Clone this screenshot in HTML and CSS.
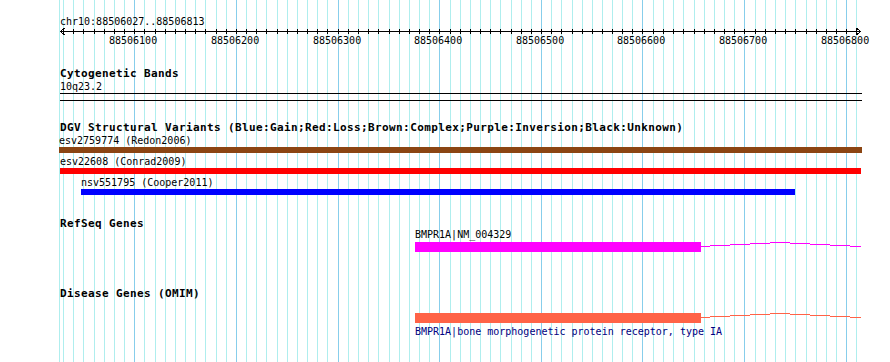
FILE: index.html
```html
<!DOCTYPE html>
<html lang="en">
  <head>
    <meta charset="UTF-8" />
    <title>chr10:88506027..88506813</title>
    <link rel="stylesheet" href="styles.css">
  </head>
  <body>
    <div class="panel">
      <!-- grid: minor lines every 10 bp, major every 100 bp -->
      <svg class="grid" width="890" height="362">
        <path class="minor" d="M59.5 0v362M63.5 0v362M73.5 0v362M83.5 0v362M94.5 0v362M104.5 0v362M114.5 0v362M124.5 0v362M144.5 0v362M155.5 0v362M165.5 0v362M175.5 0v362M185.5 0v362M195.5 0v362M205.5 0v362M216.5 0v362M226.5 0v362M246.5 0v362M256.5 0v362M266.5 0v362M277.5 0v362M287.5 0v362M297.5 0v362M307.5 0v362M317.5 0v362M327.5 0v362M348.5 0v362M358.5 0v362M368.5 0v362M378.5 0v362M389.5 0v362M399.5 0v362M409.5 0v362M419.5 0v362M429.5 0v362M450.5 0v362M460.5 0v362M470.5 0v362M480.5 0v362M490.5 0v362M500.5 0v362M511.5 0v362M521.5 0v362M531.5 0v362M551.5 0v362M561.5 0v362M572.5 0v362M582.5 0v362M592.5 0v362M602.5 0v362M612.5 0v362M622.5 0v362M632.5 0v362M653.5 0v362M663.5 0v362M673.5 0v362M683.5 0v362M694.5 0v362M704.5 0v362M714.5 0v362M724.5 0v362M734.5 0v362M755.5 0v362M765.5 0v362M775.5 0v362M785.5 0v362M795.5 0v362M806.5 0v362M816.5 0v362M826.5 0v362M836.5 0v362M856.5 0v362"/>
        <path class="major" d="M134.5 0v362M236.5 0v362M338.5 0v362M439.5 0v362M541.5 0v362M642.5 0v362M744.5 0v362M846.5 0v362"/>
      </svg>

      <section class="ruler">
        <div class="chrom">chr10:88506027..88506813</div>
        <svg class="axis" width="890" height="7">
          <path d="M60 3.5H861"/>
          <path d="M64.5 0L60.5 3.5L64.5 7M856.5 0L860.5 3.5L856.5 7"/>
          <path d="M63.5 1v5M73.5 1v5M83.5 1v5M94.5 1v5M104.5 1v5M114.5 1v5M124.5 1v5M134.5 1v5M144.5 1v5M155.5 1v5M165.5 1v5M175.5 1v5M185.5 1v5M195.5 1v5M205.5 1v5M216.5 1v5M226.5 1v5M236.5 1v5M246.5 1v5M256.5 1v5M266.5 1v5M277.5 1v5M287.5 1v5M297.5 1v5M307.5 1v5M317.5 1v5M327.5 1v5M338.5 1v5M348.5 1v5M358.5 1v5M368.5 1v5M378.5 1v5M389.5 1v5M399.5 1v5M409.5 1v5M419.5 1v5M429.5 1v5M439.5 1v5M450.5 1v5M460.5 1v5M470.5 1v5M480.5 1v5M490.5 1v5M500.5 1v5M511.5 1v5M521.5 1v5M531.5 1v5M541.5 1v5M551.5 1v5M561.5 1v5M572.5 1v5M582.5 1v5M592.5 1v5M602.5 1v5M612.5 1v5M622.5 1v5M632.5 1v5M642.5 1v5M653.5 1v5M663.5 1v5M673.5 1v5M683.5 1v5M694.5 1v5M704.5 1v5M714.5 1v5M724.5 1v5M734.5 1v5M744.5 1v5M755.5 1v5M765.5 1v5M775.5 1v5M785.5 1v5M795.5 1v5M806.5 1v5M816.5 1v5M826.5 1v5M836.5 1v5M846.5 1v5M856.5 1v5"/>
        </svg>
        <div class="scale-labels">
          <span style="left:109px">88506100</span>
          <span style="left:211px">88506200</span>
          <span style="left:313px">88506300</span>
          <span style="left:414px">88506400</span>
          <span style="left:516px">88506500</span>
          <span style="left:617px">88506600</span>
          <span style="left:719px">88506700</span>
          <span style="left:821px">88506800</span>
        </div>
      </section>

      <!-- Cytogenetic Bands -->
      <section class="track cyto">
        <h2 class="track-title">Cytogenetic Bands</h2>
        <div class="band-label">10q23.2</div>
        <div class="band"></div>
      </section>

      <!-- DGV -->
      <section class="track dgv">
        <h2 class="track-title">DGV Structural Variants (Blue:Gain;Red:Loss;Brown:Complex;Purple:Inversion;Black:Unknown)</h2>
        <div class="variant complex" style="margin-left:59px;width:803px">
          <div class="variant-label">esv2759774 (Redon2006)</div>
          <div class="variant-bar"></div>
        </div>
        <div class="variant loss" style="margin-left:60px;width:801px">
          <div class="variant-label">esv22608 (Conrad2009)</div>
          <div class="variant-bar"></div>
        </div>
        <div class="variant gain" style="margin-left:81px;width:714px">
          <div class="variant-label">nsv551795 (Cooper2011)</div>
          <div class="variant-bar"></div>
        </div>
      </section>

      <!-- RefSeq -->
      <section class="track refseq">
        <h2 class="track-title">RefSeq Genes</h2>
        <div class="gene" style="margin-left:415px">
          <div class="gene-label">BMPR1A|NM_004329</div>
          <div class="gene-model">
            <div class="exon" style="width:286px"></div>
            <svg class="intron" width="160" height="10">
              <path d="M0 4.5H9M9 3.5H29M29 2.5H49M49 1.5H69M69 0.5H89M89 1.5H109M109 2.5H129M129 3.5H149M149 4.5H160"/>
            </svg>
          </div>
        </div>
      </section>

      <!-- OMIM -->
      <section class="track omim">
        <h2 class="track-title">Disease Genes (OMIM)</h2>
        <div class="gene" style="margin-left:415px">
          <div class="gene-model">
            <div class="exon" style="width:286px"></div>
            <svg class="intron" width="160" height="10">
              <path d="M0 4.5H9M9 3.5H29M29 2.5H49M49 1.5H69M69 0.5H89M89 1.5H109M109 2.5H129M129 3.5H149M149 4.5H160"/>
            </svg>
          </div>
          <div class="gene-label">BMPR1A|bone morphogenetic protein receptor, type IA</div>
        </div>
      </section>
    </div>
  </body>
</html>
```

FILE: styles.css
```css
body {
  margin: 0;
  background-color: #fff;
  color: #000;
  font-family: "DejaVu Sans Mono", "Liberation Mono", monospace;
  font-size: 10px;
  line-height: 13px;
}

.panel {
  position: relative;
  width: 890px;
  height: 362px;
  overflow: hidden;
}

/* Grid */
.grid {
  position: absolute;
  top: 0;
  left: 0;
  shape-rendering: crispEdges;
}

.grid .minor {
  stroke: #afeeee;
}

.grid .major {
  stroke: #87ceeb;
}

.ruler,
.track {
  position: relative;
}

/* Ruler */
.chrom {
  padding: 15px 0 0 60px;
  white-space: nowrap;
}

.axis {
  display: block;
}

.axis path {
  stroke: #000;
  fill: none;
  shape-rendering: crispEdges;
}

.scale-labels {
  position: relative;
  height: 13px;
  margin-top: -1px;
}

.scale-labels span {
  position: absolute;
  top: 0;
  white-space: nowrap;
}

/* Tracks */
.track-title {
  margin: 20px 0 0;
  padding-left: 60px;
  font-size: 11px;
  font-weight: bold;
  letter-spacing: 0.38px;
  line-height: 13px;
  white-space: nowrap;
}

.band-label {
  padding-left: 60px;
}

.band {
  margin-left: 60px;
  width: 802px;
  height: 6px;
  border-top: 1px solid #000;
  border-bottom: 1px solid #000;
}

.variant + .variant {
  margin-top: 2px;
}

.variant-label {
  white-space: nowrap;
}

.variant-bar {
  height: 6px;
}

.complex .variant-bar {
  background-color: #8b4513;
}

.loss .variant-bar {
  background-color: #ff0000;
}

.gain .variant-bar {
  background-color: #0000ff;
}

.refseq .track-title {
  margin-top: 22px;
}

.omim .track-title {
  margin-top: 35px;
}

.gene-label {
  white-space: nowrap;
}

.gene-model {
  display: flex;
}

.exon {
  height: 10px;
}

.intron {
  display: block;
  shape-rendering: crispEdges;
}

.intron path {
  fill: none;
  stroke-width: 1;
}

.refseq .gene {
  margin-top: -2px;
}

.refseq .gene-model {
  margin-top: 1px;
}

.refseq .exon {
  background-color: #ff00ff;
}

.refseq .intron path {
  stroke: #ff00ff;
}

.omim .gene-model {
  margin-top: 13px;
}

.omim .gene-label {
  margin-top: 2px;
  color: #000080;
}

.omim .exon {
  background-color: #ff6347;
}

.omim .intron path {
  stroke: #ff6347;
}
```
